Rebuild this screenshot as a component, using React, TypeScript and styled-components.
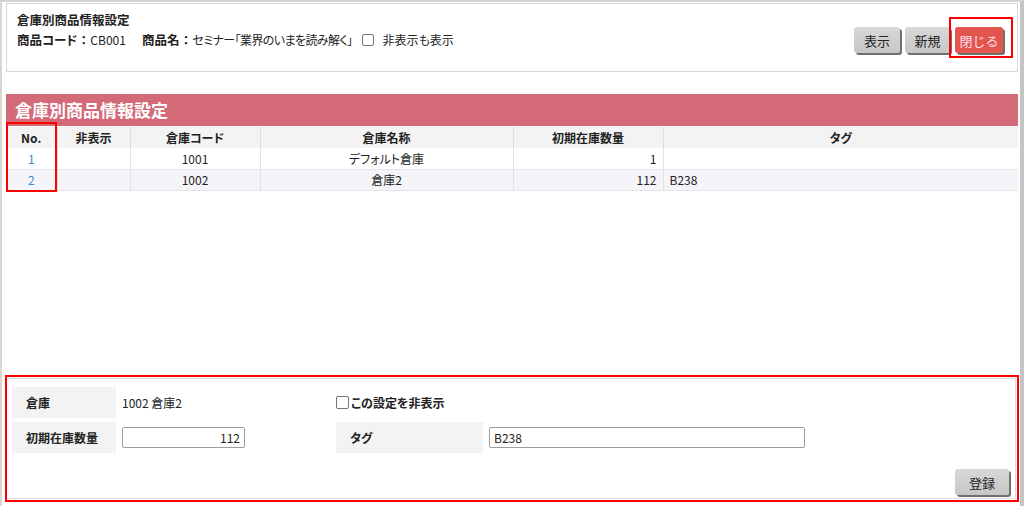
import styled, { createGlobalStyle, css } from "styled-components"

const GlobalStyle = createGlobalStyle`
  html, body { margin: 0; padding: 0; background: #fff; }
  body {
    font-family: "Noto Sans CJK JP", "Noto Sans", "Liberation Sans", sans-serif;
    font-size: 12px;
    font-feature-settings: "palt";
    color: #222;
  }
  * { box-sizing: border-box; }
`

// ─── Frame ───────────────────────────────────────────────────────────────────

const Frame = styled.div`
  height: 506px;
  display: flex;
  flex-direction: column;
  border-top: 2px solid #d4d4d4;
  border-left: 2px solid #ddd6cc;
  border-right: 4px solid #c4c4c4;
  padding: 1px 2px 0 4px;
`

// ─── Cabeçalho ───────────────────────────────────────────────────────────────

const HeaderBox = styled.header`
  height: 69px;
  border: 1px solid #d6d6d6;
  display: flex;
  justify-content: space-between;
  padding: 6px 14px 0 10px;
`

const HeaderInfo = styled.div`
  display: flex;
  flex-direction: column;
  line-height: 20px;
`

const HeaderTitle = styled.div`
  font-weight: 700;
  font-size: 12.5px;
`

const InfoLine = styled.div`
  display: flex;
  align-items: center;
`

const InfoLabel = styled.span`
  font-weight: 700;
  font-size: 12.5px;
`

const Colon = styled.span`
  display: inline-block;
  width: 13px;
  text-align: center;
  font-weight: 700;
`

const InfoValue = styled.span<{ $gap?: number; $tight?: boolean }>`
  margin-right: ${({ $gap }) => $gap ?? 0}px;
  letter-spacing: ${({ $tight }) => ($tight ? "-0.6px" : "0")};
`

const Check = styled.input.attrs({ type: "checkbox" })`
  appearance: none;
  width: 12px;
  height: 12px;
  margin: 0 8px 0 10px;
  border: 1px solid #777;
  border-radius: 2px;
  background: #fff;
`

const ButtonRow = styled.div`
  display: flex;
  gap: 5px;
  margin-top: 17px;
  align-self: flex-start;
`

const Button = styled.button<{ $danger?: boolean; $w: number }>`
  width: ${({ $w }) => $w}px;
  height: 26px;
  padding: 0;
  border: none;
  border-radius: 3px;
  font-family: inherit;
  font-size: 13px;
  color: #222;
  background: linear-gradient(#d8d8d8, #c6c6c6);
  box-shadow: 2px 2px 0 #6f6f6f;
  ${({ $danger }) =>
    $danger &&
    css`
      color: #fde;
      background: #e2564d;
    `}
`

const Highlight = styled.div`
  position: relative;
  &::after {
    content: "";
    position: absolute;
    inset: -10px -10px -5px -6px;
    border: 2px solid #f00;
    pointer-events: none;
  }
`

// ─── Tabela ──────────────────────────────────────────────────────────────────

const PanelBar = styled.div`
  margin-top: 22px;
  height: 32px;
  background: #d46a77;
  color: #fff;
  font-size: 17px;
  font-weight: 700;
  line-height: 32px;
  padding-left: 9px;
`

const TableWrap = styled.div`
  position: relative;
`

const NoHighlight = styled.div`
  position: absolute;
  left: 0;
  top: -4px;
  width: 51px;
  height: 70px;
  border: 2px solid #f00;
  pointer-events: none;
`

const Table = styled.table`
  width: 100%;
  border-collapse: collapse;
  table-layout: fixed;
  margin-top: 1px;
`

const Th = styled.th`
  height: 21px;
  padding: 0;
  background: #f3f3f3;
  border-right: 1px solid #dedede;
  font-weight: 700;
  font-size: 12px;
  &:last-child { border-right: none; }
`

const Tr = styled.tr<{ $alt?: boolean }>`
  background: ${({ $alt }) => ($alt ? "#f5f5f9" : "#fff")};
  border-bottom: 1px solid #e4e4e4;
`

const Td = styled.td<{ $align?: "left" | "center" | "right"; $link?: boolean }>`
  height: 21px;
  padding: 0 6px;
  text-align: ${({ $align }) => $align ?? "center"};
  border-right: 1px solid #e2e2e2;
  color: ${({ $link }) => ($link ? "#3a8bc7" : "#222")};
  &:last-child { border-right: none; }
`

const Spacer = styled.div`
  flex: 1;
`

// ─── Formulário ──────────────────────────────────────────────────────────────

const FormPanel = styled.div`
  position: relative;
  height: 121px;
  margin: 0 2px 7px 0;
  border: 1px solid #dcdcdc;
  padding: 8px 6px 0 5px;
  display: flex;
  flex-direction: column;
  &::after {
    content: "";
    position: absolute;
    inset: -4px -4px -4px -2px;
    border: 2px solid #f00;
    pointer-events: none;
  }
`

const FormGrid = styled.div`
  display: grid;
  grid-template-columns: 104px 208px 147px 1fr;
  column-gap: 6px;
  row-gap: 4px;
`

const FieldLabel = styled.div`
  height: 31px;
  background: #f3f3f3;
  font-weight: 700;
  display: flex;
  align-items: center;
  padding-left: 14px;
`

const FieldValue = styled.div`
  display: flex;
  align-items: center;
`

const CheckLabel = styled.label`
  display: flex;
  align-items: center;
  font-weight: 700;
  grid-column: 3 / 5;
`

const FormCheck = styled(Check)`
  margin: 0 2px 0 0;
  width: 13px;
  height: 13px;
`

const TextInput = styled.input<{ $w: number; $right?: boolean }>`
  width: ${({ $w }) => $w}px;
  height: 21px;
  border: 1px solid #9e9e9e;
  border-radius: 2px;
  padding: 0 4px;
  font-family: inherit;
  font-size: 12px;
  color: #222;
  text-align: ${({ $right }) => ($right ? "right" : "left")};
`

const FormFooter = styled.div`
  margin-top: auto;
  display: flex;
  justify-content: flex-end;
  padding: 0 0 3px 0;
`

const ROWS = [
  { no: "1", code: "1001", name: "デフォルト倉庫", qty: "1", tag: "" },
  { no: "2", code: "1002", name: "倉庫2", qty: "112", tag: "B238" },
]

export default function App() {
  return (
    <>
      <GlobalStyle />
      <Frame>
        <HeaderBox>
          <HeaderInfo>
            <HeaderTitle>倉庫別商品情報設定</HeaderTitle>
            <InfoLine>
              <InfoLabel>商品コード</InfoLabel>
              <Colon>：</Colon>
              <InfoValue $gap={16}>CB001</InfoValue>
              <InfoLabel>商品名</InfoLabel>
              <Colon>：</Colon>
              <InfoValue $tight>セミナー「業界のいまを読み解く」</InfoValue>
              <Check readOnly />
              <span>非表示も表示</span>
            </InfoLine>
          </HeaderInfo>
          <ButtonRow>
            <Button $w={46}>表示</Button>
            <Button $w={45}>新規</Button>
            <Highlight>
              <Button $w={48} $danger>閉じる</Button>
            </Highlight>
          </ButtonRow>
        </HeaderBox>

        <PanelBar>倉庫別商品情報設定</PanelBar>
        <TableWrap>
          <Table>
            <colgroup>
              <col style={{ width: 51 }} />
              <col style={{ width: 73 }} />
              <col style={{ width: 130 }} />
              <col style={{ width: 253 }} />
              <col style={{ width: 150 }} />
              <col />
            </colgroup>
            <thead>
              <tr>
                <Th>No.</Th>
                <Th>非表示</Th>
                <Th>倉庫コード</Th>
                <Th>倉庫名称</Th>
                <Th>初期在庫数量</Th>
                <Th>タグ</Th>
              </tr>
            </thead>
            <tbody>
              {ROWS.map((r, i) => (
                <Tr key={r.no} $alt={i % 2 === 1}>
                  <Td $link>{r.no}</Td>
                  <Td></Td>
                  <Td>{r.code}</Td>
                  <Td>{r.name}</Td>
                  <Td $align="right">{r.qty}</Td>
                  <Td $align="left">{r.tag}</Td>
                </Tr>
              ))}
            </tbody>
          </Table>
          <NoHighlight />
        </TableWrap>

        <Spacer />

        <FormPanel>
          <FormGrid>
            <FieldLabel>倉庫</FieldLabel>
            <FieldValue>1002 倉庫2</FieldValue>
            <CheckLabel>
              <FormCheck readOnly />
              この設定を非表示
            </CheckLabel>
            <FieldLabel>初期在庫数量</FieldLabel>
            <FieldValue>
              <TextInput $w={123} $right defaultValue="112" />
            </FieldValue>
            <FieldLabel>タグ</FieldLabel>
            <FieldValue>
              <TextInput $w={316} defaultValue="B238" />
            </FieldValue>
          </FormGrid>
          <FormFooter>
            <Button $w={54}>登録</Button>
          </FormFooter>
        </FormPanel>
      </Frame>
    </>
  )
}
